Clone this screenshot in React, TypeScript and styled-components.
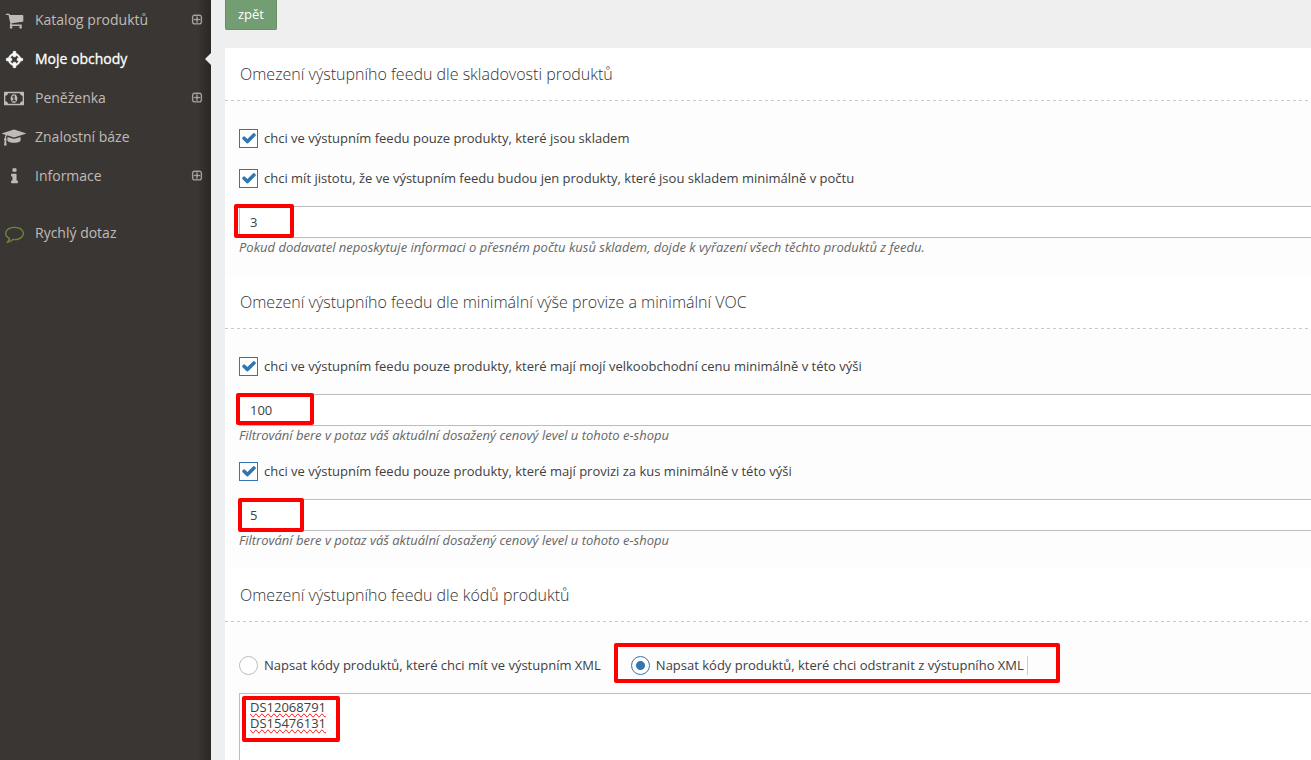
import React, { useState } from "react";
import styled, { createGlobalStyle, css } from "styled-components";

const GlobalStyle = createGlobalStyle`
  *, *::before, *::after { box-sizing: border-box; }
  body {
    margin: 0;
    background: #efefef;
    color: #404040;
    font-family: "Open Sans", "Noto Sans", sans-serif;
    font-size: 13px;
    line-height: 19px;
  }
`;

const Layout = styled.div`
  display: flex;
  min-height: 100vh;
  overflow: hidden;
`;

const Sidebar = styled.aside`
  flex: 0 0 211px;
  background:
    linear-gradient(to left, #2b2724, #3a3633) right / 14px 100% no-repeat,
    #3a3633;
`;

const MenuList = styled.ul`
  list-style: none;
  margin: 0 0 18px;
  padding: 0;
`;

const MenuIcon = styled.span<{ $color?: string }>`
  display: flex;
  justify-content: center;
  flex: 0 0 26px;
  padding-top: 2px;
  color: ${(p) => p.$color ?? "inherit"};
`;

const MenuLink = styled.a<{ $active?: boolean }>`
  position: relative;
  display: flex;
  align-items: center;
  gap: 8px;
  height: 39px;
  padding: 0 8px 0 1px;
  color: ${(p) => (p.$active ? "#fff" : "#c0bbb7")};
  font-size: 14px;
  -webkit-text-stroke: ${(p) => (p.$active ? "0.3px #fff" : "0")};
  text-decoration: none;

  & > svg {
    stroke: currentColor;
    stroke-width: 40px;
  }

  ${(p) =>
    p.$active &&
    css`
      ${MenuIcon} svg {
        stroke: currentColor;
        stroke-width: 70px;
      }
      &::after {
        content: "";
        position: absolute;
        right: 0;
        top: 53%;
        margin-top: -7px;
        border: 6px solid transparent;
        border-left-width: 0;
        border-right-color: #efefef;
      }
    `}
`;

const MenuText = styled.span`
  flex: 1;
  white-space: nowrap;
`;

const Content = styled.main`
  flex: 1;
  min-width: 0;
  display: flex;
  flex-direction: column;
  padding-left: 14px;
`;

const Toolbar = styled.div`
  padding-bottom: 18px;
`;

const BackButton = styled.button`
  display: block;
  height: 30px;
  padding: 0 12px;
  border: 1px solid #659265;
  border-top: 0;
  border-radius: 0 0 2px 2px;
  background: #739e73;
  color: #fff;
  font: inherit;
  cursor: pointer;
`;

const Form = styled.form`
  flex: 1;
  display: flex;
  flex-direction: column;
  background: #fff;
`;

const SectionTitle = styled.h2`
  margin: 0;
  height: 53px;
  padding: 0 15px;
  background:
    repeating-linear-gradient(to right, #c8c8c8 0 3px, #fff 3px 6px) bottom / 100% 1px no-repeat,
    #fff;
  color: #333;
  font-size: 16px;
  font-weight: 300;
  line-height: 52px;
`;

const SectionBody = styled.div<{ $grow?: boolean }>`
  display: flex;
  flex-direction: column;
  flex: ${(p) => (p.$grow ? 1 : "none")};
  padding: ${(p) => (p.$grow ? "34px 0 0 14px" : "28px 0 19px 14px")};
  background: #fdfdfd;
`;

const Stack = styled.div`
  display: flex;
  flex-direction: column;
  gap: 21px;
  margin-bottom: 18px;
`;

const Group = styled.div`
  & + & {
    margin-top: 17px;
  }
`;

const OptionRow = styled.div`
  display: flex;
  gap: 30px;
  margin-bottom: 18px;
`;

const Option = styled.label`
  position: relative;
  display: flex;
  align-items: center;
  gap: 6px;
  height: 19px;
  white-space: nowrap;
  cursor: pointer;
`;

const tick = css`
  appearance: none;
  flex: none;
  width: 19px;
  height: 19px;
  margin: 0;
  background: #fff;
`;

const CheckInput = styled.input`
  ${tick}
  border: 1px solid #3276b1;

  & + svg {
    display: none;
    position: absolute;
    left: 2px;
    top: 1px;
    color: #3276b1;
    pointer-events: none;
  }
  &:checked + svg {
    display: block;
  }
`;

const RadioInput = styled.input`
  ${tick}
  border: 1px solid #bdbdbd;
  border-radius: 50%;

  &:checked {
    border-color: #3276b1;
    background: radial-gradient(circle, #3276b1 4px, #fff 5px);
  }
`;

const SelectionEdge = styled.span`
  padding-right: 3px;
  border-right: 1px solid #b4d0f4;
`;

const FieldWrap = styled.div<{ $grow?: boolean }>`
  position: relative;
  display: flex;
  flex: ${(p) => (p.$grow ? 1 : "none")};
`;

const TextInput = styled.input`
  width: 100%;
  height: 32px;
  padding: 0 10px;
  border: 1px solid #bdbdbd;
  border-right: 0;
  border-radius: 0;
  background: #fff;
  color: #404040;
  font: inherit;
  outline: 0;
`;

const CodesArea = styled.textarea`
  width: 100%;
  min-height: 67px;
  padding: 5px 10px;
  border: 1px solid #bdbdbd;
  border-right: 0;
  border-bottom: 0;
  border-radius: 0;
  background: #fff;
  color: #404040;
  font: inherit;
  line-height: 16px;
  text-decoration: underline wavy #f03c3c 1px;
  text-decoration-line: spelling-error;
  outline: 0;
  resize: none;
`;

const Note = styled.div`
  height: 19px;
  color: #666;
  font-style: italic;
`;

const Highlight = styled.span<{ $x: number; $y: number; $w: number; $h: number }>`
  position: absolute;
  left: ${(p) => p.$x}px;
  top: ${(p) => p.$y}px;
  width: ${(p) => p.$w}px;
  height: ${(p) => p.$h}px;
  border: 4px solid #f00;
  border-radius: 2px;
  pointer-events: none;
`;

type Glyph = { w: number; d: string };

const glyphs: Record<string, Glyph> = {
  cart: {
    w: 1792,
    d: "M704 1536q0 52-38 90t-90 38-90-38-38-90 38-90 90-38 90 38 38 90zm896 0q0 52-38 90t-90 38-90-38-38-90 38-90 90-38 90 38 38 90zm128-1088v512q0 24-16.5 42.5t-40.5 21.5l-1044 122q13 60 13 70 0 16-24 64h920q26 0 45 19t19 45-19 45-45 19h-1024q-26 0-45-19t-19-45q0-11 8-31.5t16-36 21.5-40 15.5-29.5l-177-823h-204q-26 0-45-19t-19-45 19-45 45-19h256q16 0 28.5 6.5t19.5 15.5 13 24.5 8 26 5.5 29.5 4.5 26h1201q26 0 45 19t19 45z",
  },
  crosshairs: {
    w: 1792,
    d: "M1325 1024h-109q-26 0-45-19t-19-45v-128q0-26 19-45t45-19h109q-32-108-112.5-188.5t-188.5-112.5v109q0 26-19 45t-45 19h-128q-26 0-45-19t-19-45v-109q-108 32-188.5 112.5t-112.5 188.5h109q26 0 45 19t19 45v128q0 26-19 45t-45 19h-109q32 108 112.5 188.5t188.5 112.5v-109q0-26 19-45t45-19h128q26 0 45 19t19 45v109q108-32 188.5-112.5t112.5-188.5zm339-192v128q0 26-19 45t-45 19h-143q-37 161-154.5 278.5t-278.5 154.5v143q0 26-19 45t-45 19h-128q-26 0-45-19t-19-45v-143q-161-37-278.5-154.5t-154.5-278.5h-143q-26 0-45-19t-19-45v-128q0-26 19-45t45-19h143q37-161 154.5-278.5t278.5-154.5v-143q0-26 19-45t45-19h128q26 0 45 19t19 45v143q161 37 278.5 154.5t154.5 278.5h143q26 0 45 19t19 45z",
  },
  money: {
    w: 1920,
    d: "M768 1152h384v-96h-128v-448h-114l-148 137 77 80q42-37 55-57h2v288h-128v96zm512-256q0 70-21 142t-59.5 134-101.5 101-138 39-138-39-101.5-101-59.5-134-21-142 21-142 59.5-134 101.5-101 138-39 138 39 101.5 101 59.5 134 21 142zm512 256v-512q-106 0-181-75t-75-181h-1152q0 106-75 181t-181 75v512q106 0 181 75t75 181h1152q0-106 75-181t181-75zm128-832v1152q0 26-19 45t-45 19h-1792q-26 0-45-19t-19-45v-1152q0-26 19-45t45-19h1792q26 0 45 19t19 45z",
  },
  cap: {
    w: 2304,
    d: "M1774 836l18 316q4 69-82 128t-235 93.5-323 34.5-323-34.5-235-93.5-82-128l18-316 574 181q22 7 48 7t48-7zm530-324q0 23-22 31l-1120 352q-4 1-10 1t-10-1l-652-206q-43 34-71 111.5t-34 178.5q63 36 63 109 0 69-58 107l58 433q2 14-8 25-9 11-24 11h-192q-15 0-24-11-10-11-8-25l58-433q-58-38-58-107 0-73 65-111 11-207 98-330l-333-104q-22-8-22-31t22-31l1120-352q4-1 10-1t10 1l1120 352q22 8 22 31z",
  },
  info: {
    w: 1792,
    d: "M1216 1344v128q0 26-19 45t-45 19h-512q-26 0-45-19t-19-45v-128q0-26 19-45t45-19h64v-384h-64q-26 0-45-19t-19-45v-128q0-26 19-45t45-19h384q26 0 45 19t19 45v576h64q26 0 45 19t19 45zm-128-1152v192q0 26-19 45t-45 19h-256q-26 0-45-19t-19-45v-192q0-26 19-45t45-19h256q26 0 45 19t19 45z",
  },
  comment: {
    w: 1792,
    d: "M896 384q-204 0-381.5 69.5t-282 187.5-104.5 255q0 112 71.5 213.5t201.5 175.5l87 50-27 96q-24 91-70 172 152-63 275-171l43-38 57 6q69 8 130 8 204 0 381.5-69.5t282-187.5 104.5-255-104.5-255-282-187.5-381.5-69.5zm896 512q0 174-120 321.5t-326 233-450 85.5q-70 0-145-8-198 175-460 242-49 14-114 22h-5q-15 0-27-10.5t-16-27.5v-1q-3-4-.5-12t2-10 4.5-9.5l6-9 7-8.5 8-9q7-8 31-34.5t34.5-38 31-39.5 32.5-51 27-59 26-76q-157-89-247.5-220t-90.5-281q0-174 120-321.5t326-233 450-85.5 450 85.5 326 233 120 321.5z",
  },
  plus: {
    w: 1792,
    d: "M1344 800v64q0 14-9 23t-23 9h-352v352q0 14-9 23t-23 9h-64q-14 0-23-9t-9-23v-352h-352q-14 0-23-9t-9-23v-64q0-14 9-23t23-9h352v-352q0-14 9-23t23-9h64q14 0 23 9t9 23v352h352q14 0 23 9t9 23zm128 448v-832q0-66-47-113t-113-47h-832q-66 0-113 47t-47 113v832q0 66 47 113t113 47h832q66 0 113-47t47-113zm128-832v832q0 119-84.5 203.5t-203.5 84.5h-832q-119 0-203.5-84.5t-84.5-203.5v-832q0-119 84.5-203.5t203.5-84.5h832q119 0 203.5 84.5t84.5 203.5z",
  },
  check: {
    w: 1792,
    d: "M1671 566q0 40-28 68l-724 724-136 136q-28 28-68 28t-68-28l-136-136-362-362q-28-28-28-68t28-68l136-136q28-28 68-28t68 28l294 295 656-657q28-28 68-28t68 28l136 136q28 28 28 68z",
  },
};

function Icon({ name, size }: { name: string; size: number }) {
  const { w, d } = glyphs[name];
  return (
    <svg
      width={Math.round((w / 1792) * size)}
      height={size}
      viewBox={`0 0 ${w} 1792`}
      fill="currentColor"
      aria-hidden="true"
    >
      <path d={d} />
    </svg>
  );
}

const menu = [
  { icon: "cart", text: "Katalog produktů", expandable: true },
  { icon: "crosshairs", text: "Moje obchody", active: true },
  { icon: "money", text: "Peněženka", expandable: true },
  { icon: "cap", text: "Znalostní báze" },
  { icon: "info", text: "Informace", expandable: true },
];

function Checkbox({ children }: { children: React.ReactNode }) {
  return (
    <Option>
      <CheckInput type="checkbox" defaultChecked />
      <Icon name="check" size={16} />
      <span>{children}</span>
    </Option>
  );
}

export default function App() {
  const [mode, setMode] = useState("remove");

  return (
    <>
      <GlobalStyle />
      <Layout>
        <Sidebar>
          <nav>
            <MenuList>
              {menu.map((m) => (
                <li key={m.text}>
                  <MenuLink href="#" $active={m.active}>
                    <MenuIcon>
                      <Icon name={m.icon} size={19} />
                    </MenuIcon>
                    <MenuText>{m.text}</MenuText>
                    {m.expandable && <Icon name="plus" size={12} />}
                  </MenuLink>
                </li>
              ))}
            </MenuList>
            <MenuList>
              <li>
                <MenuLink href="#">
                  <MenuIcon $color="#71843f">
                    <Icon name="comment" size={19} />
                  </MenuIcon>
                  <MenuText>Rychlý dotaz</MenuText>
                </MenuLink>
              </li>
            </MenuList>
          </nav>
        </Sidebar>

        <Content>
          <Toolbar>
            <BackButton type="button">zpět</BackButton>
          </Toolbar>

          <Form>
            <SectionTitle>Omezení výstupního feedu dle skladovosti produktů</SectionTitle>
            <SectionBody>
              <Stack>
                <Checkbox>chci ve výstupním feedu pouze produkty, které jsou skladem</Checkbox>
                <Checkbox>
                  chci mít jistotu, že ve výstupním feedu budou jen produkty, které jsou skladem
                  minimálně v počtu
                </Checkbox>
              </Stack>
              <FieldWrap>
                <TextInput aria-label="Minimální počet kusů skladem" defaultValue="3" />
                <Highlight $x={-5} $y={-2} $w={60} $h={34} />
              </FieldWrap>
              <Note>
                Pokud dodavatel neposkytuje informaci o přesném počtu kusů skladem, dojde k vyřazení
                všech těchto produktů z feedu.
              </Note>
            </SectionBody>

            <SectionTitle>
              Omezení výstupního feedu dle minimální výše provize a minimální VOC
            </SectionTitle>
            <SectionBody>
              <Group>
                <Stack>
                  <Checkbox>
                    chci ve výstupním feedu pouze produkty, které mají mojí velkoobchodní cenu
                    minimálně v této výši
                  </Checkbox>
                </Stack>
                <FieldWrap>
                  <TextInput aria-label="Minimální velkoobchodní cena" defaultValue="100" />
                  <Highlight $x={-3} $y={-1} $w={78} $h={32} />
                </FieldWrap>
                <Note>Filtrování bere v potaz váš aktuální dosažený cenový level u tohoto e-shopu</Note>
              </Group>
              <Group>
                <Stack>
                  <Checkbox>
                    chci ve výstupním feedu pouze produkty, které mají provizi za kus minimálně v
                    této výši
                  </Checkbox>
                </Stack>
                <FieldWrap>
                  <TextInput aria-label="Minimální provize za kus" defaultValue="5" />
                  <Highlight $x={-1} $y={-1} $w={66} $h={34} />
                </FieldWrap>
                <Note>Filtrování bere v potaz váš aktuální dosažený cenový level u tohoto e-shopu</Note>
              </Group>
            </SectionBody>

            <SectionTitle>Omezení výstupního feedu dle kódů produktů</SectionTitle>
            <SectionBody $grow>
              <OptionRow>
                <Option>
                  <RadioInput
                    type="radio"
                    name="mode"
                    checked={mode === "keep"}
                    onChange={() => setMode("keep")}
                  />
                  <span>Napsat kódy produktů, které chci mít ve výstupním XML</span>
                </Option>
                <Option>
                  <RadioInput
                    type="radio"
                    name="mode"
                    checked={mode === "remove"}
                    onChange={() => setMode("remove")}
                  />
                  <SelectionEdge>
                    Napsat kódy produktů, které chci odstranit z výstupního XML
                  </SelectionEdge>
                  <Highlight $x={-17} $y={-13} $w={446} $h={40} />
                </Option>
              </OptionRow>
              <FieldWrap $grow>
                <CodesArea
                  aria-label="Kódy produktů"
                  spellCheck={false}
                  defaultValue={"DS12068791\nDS15476131"}
                />
                <Highlight $x={3} $y={3} $w={98} $h={46} />
              </FieldWrap>
            </SectionBody>
          </Form>
        </Content>
      </Layout>
    </>
  );
}
